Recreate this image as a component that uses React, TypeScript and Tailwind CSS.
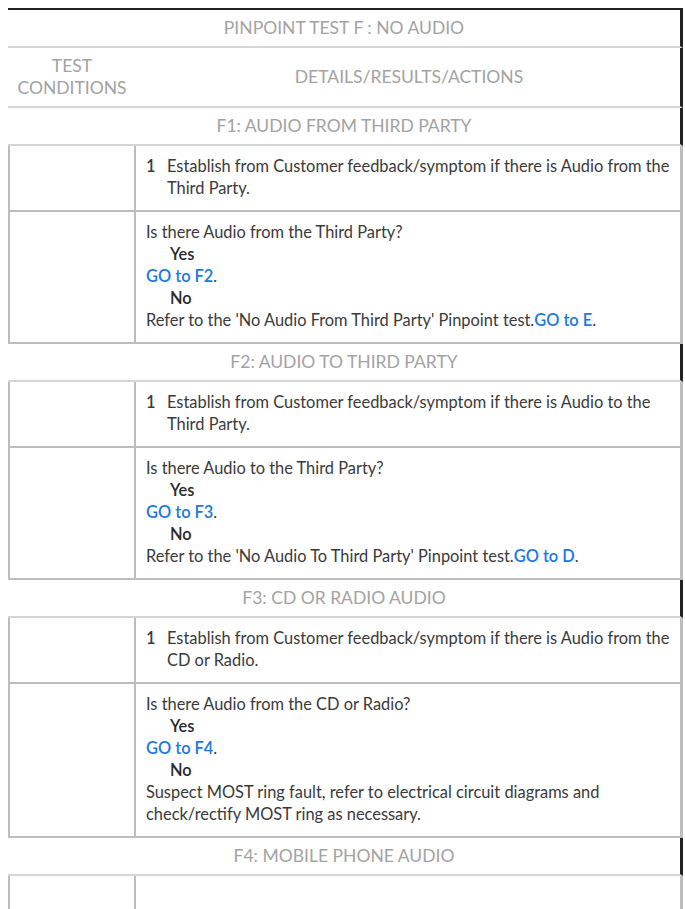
import { FC, ReactNode } from "react";

type Step = {
  title: string;
  instruction: string;
  question: string;
  yes: ReactNode;
  no: ReactNode;
};

const Link: FC<{ children: ReactNode }> = ({ children }) => (
  <span className="text-[#1a7ae0] font-semibold">{children}</span>
);

const steps: Step[] = [
  {
    title: "F1: AUDIO FROM THIRD PARTY",
    instruction:
      "Establish from Customer feedback/symptom if there is Audio from the Third Party.",
    question: "Is there Audio from the Third Party?",
    yes: (
      <>
        <Link>GO to F2</Link>.
      </>
    ),
    no: (
      <>
        Refer to the 'No Audio From Third Party' Pinpoint test.
        <Link>GO to E</Link>.
      </>
    ),
  },
  {
    title: "F2: AUDIO TO THIRD PARTY",
    instruction:
      "Establish from Customer feedback/symptom if there is Audio to the Third Party.",
    question: "Is there Audio to the Third Party?",
    yes: (
      <>
        <Link>GO to F3</Link>.
      </>
    ),
    no: (
      <>
        Refer to the 'No Audio To Third Party' Pinpoint test.
        <Link>GO to D</Link>.
      </>
    ),
  },
  {
    title: "F3: CD OR RADIO AUDIO",
    instruction:
      "Establish from Customer feedback/symptom if there is Audio from the CD or Radio.",
    question: "Is there Audio from the CD or Radio?",
    yes: (
      <>
        <Link>GO to F4</Link>.
      </>
    ),
    no: (
      <>
        Suspect MOST ring fault, refer to electrical circuit diagrams and
        check/rectify MOST ring as necessary.
      </>
    ),
  },
];

const HeaderRow: FC<{ children: ReactNode; className?: string }> = ({
  children,
  className = "",
}) => (
  <div
    className={`border-r-[3px] border-[#222] h-[38px] flex items-center justify-center text-[17.5px] text-[#a3a3a3] ${className}`}
  >
    {children}
  </div>
);

const BodyRow: FC<{ children?: ReactNode }> = ({ children }) => (
  <div className="flex border-l-2 border-r-[3px] border-b-2 border-[#bdbdbd]">
    <div className="w-[126px] shrink-0 border-r-2 border-[#bdbdbd]" />
    <div className="flex-1 pl-[10px] pr-1 pt-[9px] pb-[11px] text-[16.4px] leading-[22px] text-[#3a3a3a]">
      {children}
    </div>
  </div>
);

const StepBlock: FC<{ step: Step }> = ({ step }) => (
  <>
    <HeaderRow className="border-b-2 border-b-[#d6d6d6]">{step.title}</HeaderRow>
    <BodyRow>
      <div className="flex">
        <span className="w-[21px] shrink-0 font-semibold">1</span>
        <span>{step.instruction}</span>
      </div>
    </BodyRow>
    <BodyRow>
      <p>{step.question}</p>
      <p className="pl-6 font-semibold text-[#2a2a2a]">Yes</p>
      <p>{step.yes}</p>
      <p className="pl-6 font-semibold text-[#2a2a2a]">No</p>
      <p>{step.no}</p>
    </BodyRow>
  </>
);

export default function App() {
  return (
    <div className="bg-white h-[909px] overflow-hidden pt-2 pl-2 pr-[2px] font-['Lato',sans-serif]">
      <div className="border-t-2 border-[#222]">
        <HeaderRow className="h-[37px] border-b-2 border-b-[#d6d6d6]">
          PINPOINT TEST F : NO AUDIO
        </HeaderRow>
        <div className="flex h-[60px] border-r-[3px] border-[#222] border-b-2 border-b-[#d6d6d6] text-[17.5px] text-[#a3a3a3]">
          <div className="w-[128px] shrink-0 flex items-center justify-center text-center leading-[22px]">
            TEST
            <br />
            CONDITIONS
          </div>
          <div className="flex-1 flex items-center justify-center border-l-2 border-white">
            DETAILS/RESULTS/ACTIONS
          </div>
        </div>
        {steps.map((s) => (
          <StepBlock key={s.title} step={s} />
        ))}
        <HeaderRow className="border-b-2 border-b-[#d6d6d6]">
          F4: MOBILE PHONE AUDIO
        </HeaderRow>
        <BodyRow>
          <div className="h-[60px]" />
        </BodyRow>
      </div>
    </div>
  );
}
